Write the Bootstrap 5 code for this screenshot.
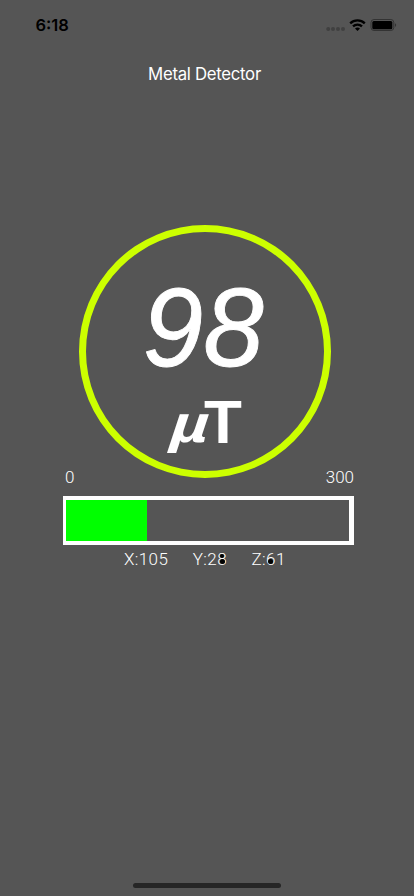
<!DOCTYPE html>
<html lang="en">
<head>
<meta charset="utf-8">
<meta name="viewport" content="width=device-width, initial-scale=1">
<title>Metal Detector</title>
<link href="https://cdn.jsdelivr.net/npm/bootstrap@5.3.0/dist/css/bootstrap.min.css" rel="stylesheet">
<style>
body{background:#555;font-family:"Liberation Sans",Arial,sans-serif;height:896px;overflow:hidden}
.status-bar{height:50px;padding:0 16px 0 35.5px;color:#000}
.clock{font:600 16.5px/50px Inter,sans-serif;letter-spacing:0}
.title{font:400 16.8px/24px Inter,sans-serif;margin:12px 0 0 -5px;letter-spacing:-.3px}
.dial{width:252px;height:253px;border:7px solid #cf0;margin:139px 0 0 79px}
.reading{font-size:112px;line-height:110px;font-style:italic;margin:41px 0 0 -3px;-webkit-text-stroke:.9px #fff}
.reading span{display:inline-block;transform:scaleX(.97)}
.unit{font-size:62px;line-height:62px;font-weight:700;margin-top:8px}
.unit em{display:inline-block;transform:translateX(3px) skewX(-5deg) scale(1.07,.85);transform-origin:50% 76%}
.scale{height:18px;margin:-10px 60px 0 65px;font:300 17px/18px Roboto,sans-serif;color:#fff}
.meter{width:291px;height:49px;margin:10px 0 0 63px;border:4px solid #fff;border-width:4px 5px 4px 3px;border-radius:0;background:#555}
.meter .progress-bar{background:#0f0}
.axes{height:20px;margin:4px 0 0 124px;font:300 17px/20px Roboto,sans-serif;color:#fff;gap:24.5px;letter-spacing:.4px}
.pip{width:5px;height:5px;background:#000;border-radius:50%;right:2.500px;top:10px}
.pip.upper{top:4.700px;width:4.500px;height:4.500px;right:2.750px}
.home-bar{width:148px;height:5px;border-radius:3px;background:#262626;margin:0 0 8px 133px}
</style>
</head>
<body class="d-flex flex-column text-white">
<header class="status-bar d-flex justify-content-between flex-shrink-0">
<span class="clock">6:18</span>
<svg width="72" height="50" viewBox="326 0 72 50">
<g fill="#404040"><circle cx="328.2" cy="29" r="2"/><circle cx="333" cy="29" r="2"/><circle cx="338" cy="29" r="2"/><circle cx="343" cy="29" r="2"/></g>
<g fill="none" stroke="#000" stroke-width="2.3"><path d="M350.2 23.4a10.4 10.4 0 0 1 14.6 0"/><path d="M353 26.4a6.4 6.4 0 0 1 9 0"/></g>
<path d="M355 28.6a3.7 3.7 0 0 1 5 0L357.500 31Z"/>
<rect x="371" y="19.500" width="22.800" height="11" rx="3" fill="none" stroke="#333"/>
<rect x="372.300" y="20.900" width="20" height="8.300" rx="1.500"/>
<path d="M395 23.300a2 2 0 0 1 0 3.600Z" fill="#333"/>
</svg>
</header>
<h1 class="title text-center">Metal Detector</h1>
<main>
<section class="dial rounded-circle d-flex flex-column align-items-center">
<div class="reading"><span>98</span></div>
<div class="unit"><em>µ</em>T</div>
</section>
<div class="scale d-flex justify-content-between"><span>0</span><span>300</span></div>
<div class="progress meter"><div class="progress-bar" style="width:28.700%"></div></div>
<div class="axes d-flex"><span>X:105</span><span>Y:2<span class="position-relative">8<i class="pip upper position-absolute"></i><i class="pip position-absolute"></i></span></span><span>Z:<span class="position-relative">6<i class="pip position-absolute"></i></span>1</span></div>
</main>
<div class="home-bar mt-auto"></div>
<script src="https://cdn.jsdelivr.net/npm/bootstrap@5.3.0/dist/js/bootstrap.bundle.min.js"></script>
</body>
</html>
